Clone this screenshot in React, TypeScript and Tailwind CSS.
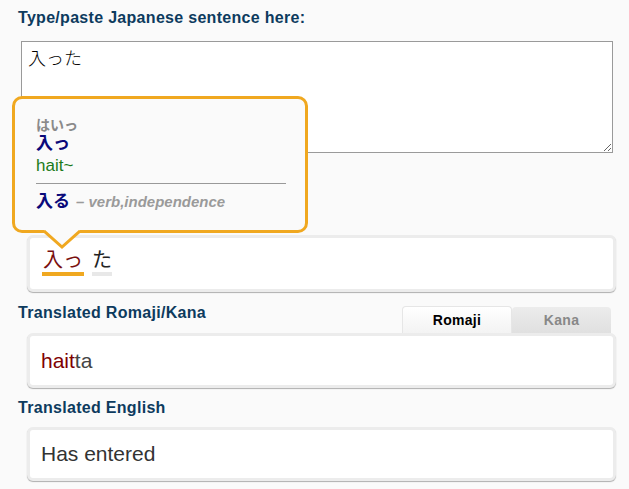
import React from 'react';

const Label: React.FC<{ children: React.ReactNode }> = ({ children }) => (
  <div className="text-[16px] font-bold tracking-[0.3px] text-[#0d3b5e] leading-[20px]">{children}</div>
);

const Box: React.FC<{ children: React.ReactNode; className?: string }> = ({ children, className }) => (
  <div
    className={
      'ml-[9px] w-[589px] rounded-[6px] border-[3px] border-[#ececec] bg-white shadow-[0_1px_1px_rgba(0,0,0,0.3)] ' +
      (className || '')
    }
  >
    {children}
  </div>
);

export default function App() {
  return (
    <div
      className="relative w-[629px] h-[489px] bg-[#fafafa] pl-[18px] pt-[8px]"
      style={{ fontFamily: '"Liberation Sans", Arial, "Noto Sans CJK JP", sans-serif' }}
    >
      <Label>Type/paste Japanese sentence here:</Label>

      <textarea
        defaultValue="入った"
        className="mt-[13px] ml-[3px] block w-[592px] h-[112px] border border-[#9a9a9a] bg-white px-[6px] py-[4px] text-[18px] leading-[22px] text-black resize-y outline-none"
        style={{ fontFamily: '"Noto Sans CJK JP", sans-serif', fontWeight: 300 }}
      />

      <div className="h-[82px]" />

      <Box className="h-[57px] flex items-start px-[12px] pt-[10px]">
        <div className="flex gap-[8px] text-[20px] leading-[22px]" style={{ fontFamily: '"Noto Sans CJK JP", sans-serif' }}>
          <span className="text-[#7a0f0f] border-b-[4px] border-[#f0a820] px-[1px] pb-[2px]">入っ</span>
          <span className="text-[#222] border-b-[4px] border-[#e8e8e8] pb-[2px]">た</span>
        </div>
      </Box>

      <div className="mt-[11px] flex items-end justify-between pr-[18px]">
        <div className="pb-[10px]">
          <Label>Translated Romaji/Kana</Label>
        </div>
        <div className="flex text-[14px] font-bold tracking-[0.3px]">
          <div className="w-[110px] h-[27px] flex items-center justify-center rounded-t-[4px] border border-b-0 border-[#e6e6e6] bg-gradient-to-b from-white to-[#f3f3f3] text-black">
            Romaji
          </div>
          <div className="w-[99px] h-[26px] mt-[1px] flex items-center justify-center rounded-t-[4px] bg-gradient-to-b from-[#ececec] to-[#e0e0e0] text-[#888]">
            Kana
          </div>
        </div>
      </div>

      <Box className="h-[55px] flex items-center px-[11px] text-[21px]">
        <span className="text-[#800000]">hait</span>
        <span className="text-[#444]">ta</span>
      </Box>

      <div className="mt-[10px] mb-[9px]">
        <Label>Translated English</Label>
      </div>

      <Box className="h-[54px] flex items-center px-[11px] text-[21px] text-[#333]">Has entered</Box>

      {/* popup */}
      <div className="absolute left-[12px] top-[96px] w-[296px] h-[137px] rounded-[10px] border-[3px] border-[#f0a820] bg-[#fafafa] px-[21px] pt-[17px]">
        <div className="text-[14px] font-bold text-[#8a8a8a] leading-[18px]">はいっ</div>
        <div className="text-[17px] font-bold text-[#0a0a7a] leading-[20px]">入っ</div>
        <div className="text-[17px] text-[#1a7a1a] leading-[24px]">hait~</div>
        <div className="mt-[5px] w-[250px] h-px bg-[#999]" />
        <div className="mt-[7px] flex items-baseline gap-[6px]">
          <span className="text-[17px] font-bold text-[#0a0a7a] leading-[22px]">入る</span>
          <span className="text-[15px] italic font-bold text-[#9a9a9a]">– verb,independence</span>
        </div>
        <svg className="absolute left-[29px] top-[131px]" width="36" height="20" viewBox="0 0 36 20">
          <polygon points="0,0 18,17 36,0" fill="#fafafa" />
          <polyline points="0,1 18,17 36,1" fill="none" stroke="#f0a820" strokeWidth="3" />
        </svg>
      </div>
    </div>
  );
}
